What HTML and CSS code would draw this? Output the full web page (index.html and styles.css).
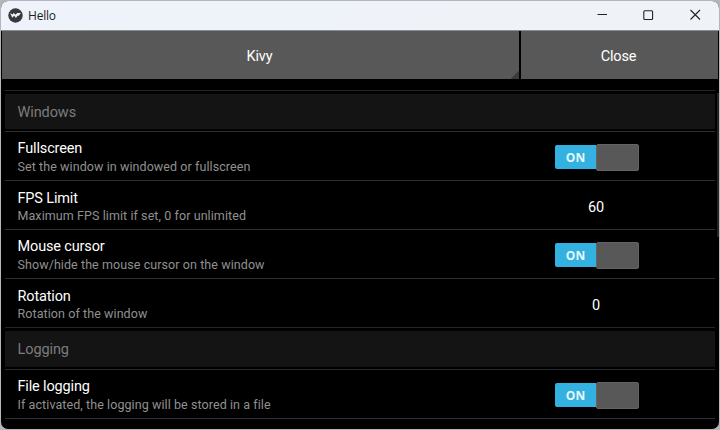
FILE: index.html
```html
<!DOCTYPE html>
<html lang="en">
<head>
<meta charset="utf-8">
<title>Hello</title>
<link rel="stylesheet" href="styles.css">
</head>
<body>
<div class="window">
  <header class="titlebar">
    <svg class="logo" viewBox="0 0 15 15"><circle cx="7.5" cy="7.5" r="7.2" fill="#38393d"/><path d="M2.2 5l2 4.7 2-2 1.7 2.2 1.7-2.2h1.3l2-2.6H9.1L7.6 6.7 5.8 5 4.6 6.6z" fill="#f0f2f5"/></svg>
    <span class="title">Hello</span>
    <svg class="controls" viewBox="0 0 120 16" fill="none" stroke="#222" stroke-width="1.1"><path d="M4.500 7.500h9.500M97.500 3l9.500 9.500M107 3L97.500 12.500"/><rect x="50.800" y="3.700" width="8.800" height="8.800" rx="1"/></svg>
  </header>
  <nav class="bar">
    <div class="button wide">Kivy</div>
    <div class="button">Close</div>
  </nav>
  <main class="settings">
    <div class="scrollbar"></div>
    <h2 class="section"><span>Windows</span></h2>
    <div class="row"><div class="label"><b>Fullscreen</b><small>Set the window in windowed or fullscreen</small></div><div class="value"><div class="switch"><span>ON</span><i></i></div></div></div>
    <div class="row low"><div class="label"><b>FPS Limit</b><small>Maximum FPS limit if set, 0 for unlimited</small></div><div class="value">60</div></div>
    <div class="row"><div class="label"><b>Mouse cursor</b><small>Show/hide the mouse cursor on the window</small></div><div class="value"><div class="switch"><span>ON</span><i></i></div></div></div>
    <div class="row low"><div class="label"><b>Rotation</b><small>Rotation of the window</small></div><div class="value">0</div></div>
    <h2 class="section"><span>Logging</span></h2>
    <div class="row"><div class="label"><b>File logging</b><small>If activated, the logging will be stored in a file</small></div><div class="value"><div class="switch"><span>ON</span><i></i></div></div></div>
  </main>
</div>
</body>
</html>
```
FILE: styles.css
```css
* { box-sizing: border-box; }
body {
  margin: 0;
  width: 720px;
  height: 430px;
  padding: 1px;
  overflow: hidden;
  background: #b4b6bc;
  font-family: Roboto, sans-serif;
}
.window {
  height: 428px;
  border-radius: 7px;
  overflow: hidden;
  background: #000;
}
.titlebar {
  display: flex;
  align-items: center;
  height: 30px;
  padding: 0 7px 1px;
  background: linear-gradient(90deg, #eef3fb, #eff3f7);
  border-bottom: 1px solid #8b8d90;
}
.logo { width: 15px; height: 15px; }
.title {
  margin-left: 5px;
  font: 12px "Open Sans", sans-serif;
  letter-spacing: -0.2px;
  color: #1c1c1c;
}
.controls { width: 120px; height: 16px; margin-left: auto; margin-right: -1px; }
.bar {
  display: grid;
  grid-template-columns: 517px 197px;
  gap: 2px;
  height: 48px;
  padding-left: 1px;
}
.button {
  display: flex;
  align-items: center;
  justify-content: center;
  padding: 2px 2px 0 0;
  background: #585858;
  color: #fff;
  font-size: 14.5px;
  letter-spacing: -0.15px;
}
.wide { background: linear-gradient(135deg, transparent 50%, #3c3c3c 50%) right bottom / 9px 9px no-repeat #585858; }
.settings { position: relative; margin: 11px 4px 0; }
.scrollbar {
  position: absolute;
  top: 3px;
  right: -4px;
  width: 2px;
  height: 144px;
  background: #242424;
}
.section {
  height: 42px;
  margin: 0;
  padding: 3px 0;
  border-top: 1px solid #252525;
  border-bottom: 1px solid #2b2b2b;
  font-size: 14.5px;
  font-weight: 400;
  letter-spacing: -0.1px;
  color: #7c7c7c;
}
.section span {
  display: flex;
  align-items: center;
  height: 35px;
  padding: 1px 0 0 12.5px;
  background: #141414;
}
.row + .section { height: 43px; }
.row + .section span { height: 36px; }
.row {
  display: grid;
  grid-template-columns: 472px 238px;
  height: 49px;
  border-bottom: 1px solid #2f2f2f;
}
.row:has(+ .section) { height: 48px; border-bottom: 0; }
.label { padding: 7px 0 0 12.5px; }
.label b {
  display: block;
  font-size: 14.5px;
  font-weight: 400;
  letter-spacing: -0.15px;
  line-height: 20px;
  color: #fff;
}
.label small {
  display: block;
  margin-top: -1px;
  font-size: 12.5px;
  letter-spacing: 0.08px;
  line-height: 17px;
  color: #909090;
  white-space: nowrap;
}
.low .label { padding-top: 8px; }
.low .label small { margin-top: -2px; }
.value {
  display: flex;
  align-items: center;
  justify-content: center;
  padding-top: 2px;
  font-size: 14.5px;
  letter-spacing: -0.2px;
  color: #fff;
}
.low .value { padding-top: 4px; }
.switch { display: flex; align-items: center; width: 84px; margin: 0 0 0 2px; }
.switch span {
  width: 41px;
  height: 24px;
  border-radius: 2px 0 0 2px;
  background: #33b1e1;
  color: #e6fbff;
  font: bold 12px/26px "Open Sans", sans-serif;
  letter-spacing: 0;
  text-align: center;
}
.switch i {
  width: 43px;
  height: 27px;
  border: 1px solid #646464;
  border-radius: 2px;
  background: #585858;
}
```
